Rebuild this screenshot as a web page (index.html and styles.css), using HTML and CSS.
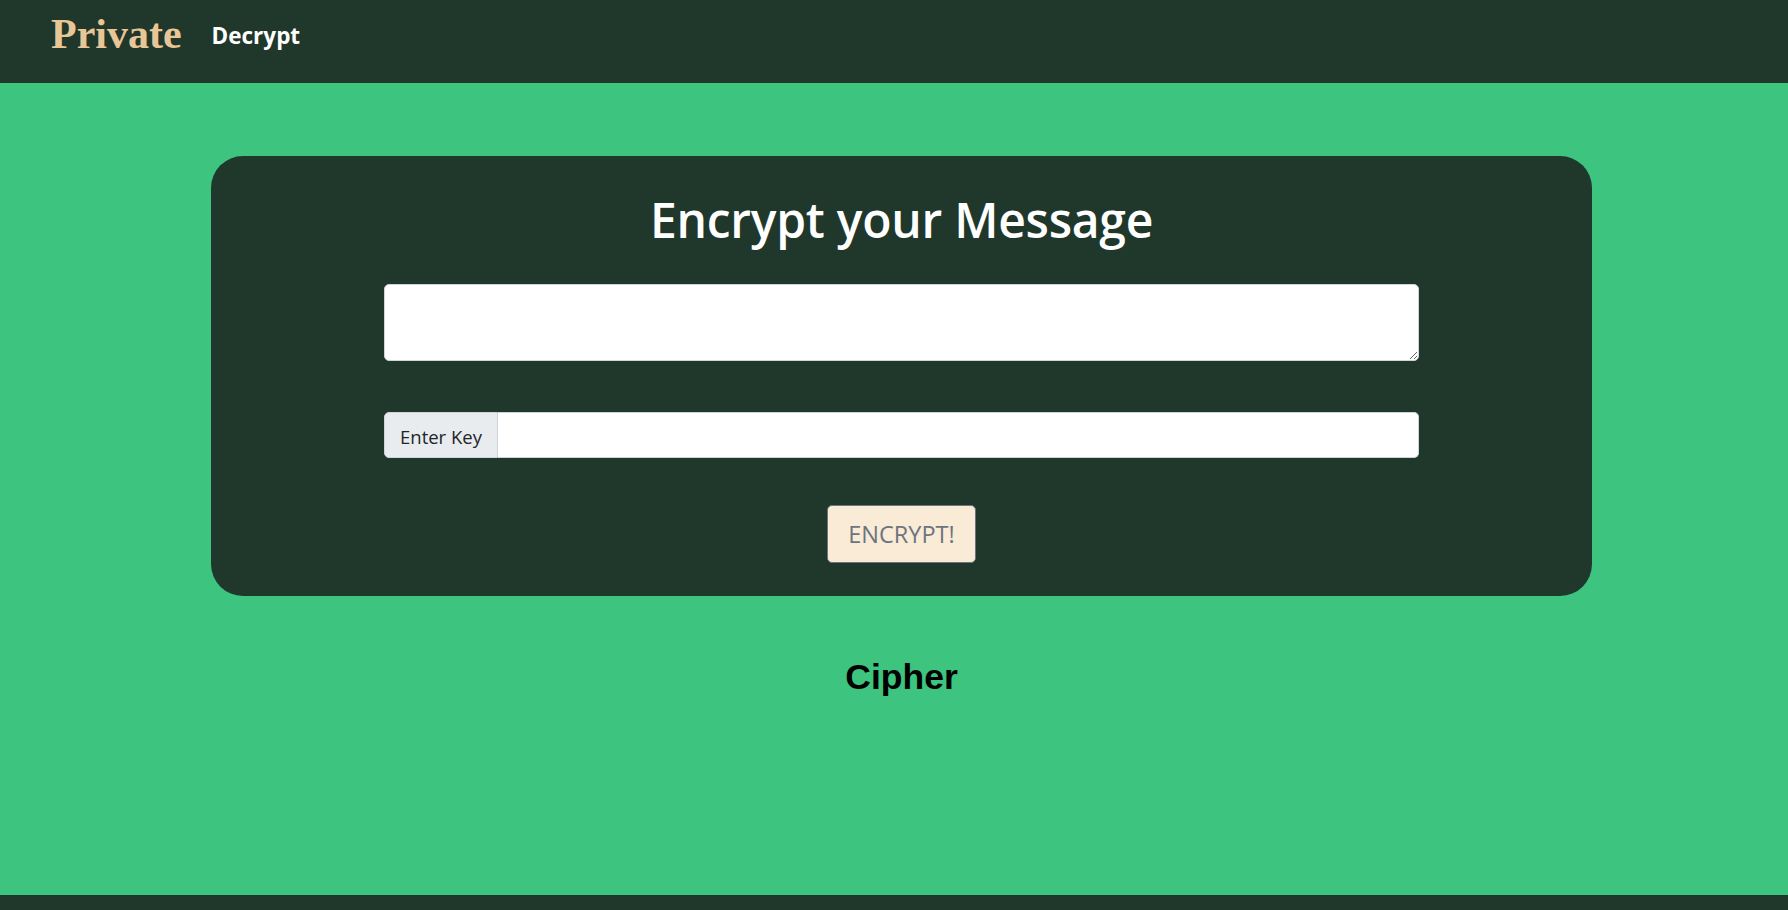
FILE: index.html
```html
<!DOCTYPE html>
<html lang="en">
<head>
<meta charset="utf-8">
<title>Private - Encrypt</title>
<link rel="stylesheet" href="styles.css">
</head>
<body>
<header class="navbar">
  <a class="brand" href="#">Private</a>
  <a class="nav-link" href="#">Decrypt</a>
</header>
<main class="page">
  <section class="card">
    <h1 class="card-title">Encrypt your Message</h1>
    <textarea class="message"></textarea>
    <div class="input-group">
      <span class="addon">Enter Key</span>
      <input class="key-input" type="text">
    </div>
    <button class="encrypt-btn" type="button">ENCRYPT!</button>
  </section>
  <h2 class="cipher">Cipher</h2>
</main>
<footer class="footer"></footer>
</body>
</html>
```
FILE: styles.css
```css
* { box-sizing: border-box; }
html, body { margin: 0; padding: 0; }
body {
  height: 910px;
  display: flex;
  flex-direction: column;
  background: #3dc47e;
  font-family: "Open Sans", "Noto Sans", sans-serif;
  overflow: hidden;
}
.navbar {
  height: 83px;
  flex: 0 0 83px;
  background: #1f382b;
  display: flex;
  align-items: center;
  padding-left: 51px;
  gap: 30px;
}
.brand {
  font-family: "Liberation Serif", serif;
  font-weight: 700;
  font-size: 42px;
  color: #e8c696;
  text-decoration: none;
  line-height: 1;
  margin-top: -15px;
}
.nav-link {
  font-family: "Open Sans", sans-serif;
  font-weight: 700;
  font-size: 22.5px;
  color: #ffffff;
  text-decoration: none;
  line-height: 1;
  margin-top: -10px;
}
.page {
  flex: 1;
  display: flex;
  flex-direction: column;
  align-items: center;
  padding-left: 15px;
  padding-top: 73px;
}
.card {
  width: 1381px;
  background: #1f382b;
  border-radius: 32px;
  padding: 34px 0 33px;
  display: flex;
  flex-direction: column;
  align-items: center;
}
.card-title {
  margin: 0 0 34px;
  font-size: 48px;
  font-weight: 600;
  line-height: 60px;
  color: #ffffff;
  letter-spacing: -0.25px;
}
.message {
  display: block;
  width: 1035px;
  height: 77px;
  border: 1px solid #ced4da;
  border-radius: 5px;
  background: #fff;
  margin: 0 0 51px;
  font-size: 18px;
  resize: vertical;
}
.input-group {
  width: 1035px;
  height: 46px;
  display: flex;
  margin-bottom: 47px;
}
.addon {
  width: 114px;
  display: flex;
  align-items: center;
  justify-content: center;
  background: #e9ecef;
  border: 1px solid #ced4da;
  border-radius: 5px 0 0 5px;
  color: #212529;
  font-size: 18.5px;
  padding-top: 2px;
}
.key-input {
  flex: 1;
  height: 100%;
  border: 1px solid #ced4da;
  border-left: none;
  border-radius: 0 5px 5px 0;
  background: #fff;
  font-size: 18px;
  padding: 0 12px;
}
.encrypt-btn {
  width: 149px;
  height: 58px;
  background: #faebd7;
  border: 1px solid #6c757d;
  border-radius: 5px;
  color: #6c757d;
  font-family: "Open Sans", sans-serif;
  font-size: 23.5px;
  padding: 0;
}
.cipher {
  margin: 60px 0 0;
  font-family: "Liberation Sans", Arial, sans-serif;
  font-weight: 700;
  font-size: 35.5px;
  line-height: 1.2;
  color: #000;
}
.footer {
  flex: 0 0 15px;
  height: 15px;
  background: #1f382b;
}
```
